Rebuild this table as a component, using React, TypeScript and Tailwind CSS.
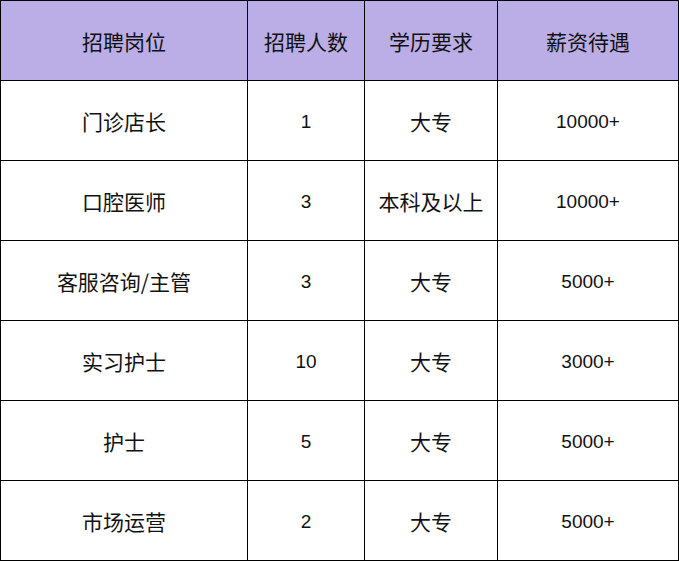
const headers = ['招聘岗位', '招聘人数', '学历要求', '薪资待遇']

const rows = [
  ['门诊店长', '1', '大专', '10000+'],
  ['口腔医师', '3', '本科及以上', '10000+'],
  ['客服咨询/主管', '3', '大专', '5000+'],
  ['实习护士', '10', '大专', '3000+'],
  ['护士', '5', '大专', '5000+'],
  ['市场运营', '2', '大专', '5000+'],
]

const cjk = "font-['Noto_Sans_CJK_SC',sans-serif] text-[21px] pt-[2px]"
const latin = "font-['Liberation_Sans',Arial,sans-serif] text-[19px] pt-[4px]"

function Cell({ text, header }: { text: string; header?: boolean }) {
  const numeric = /^[0-9+]+$/.test(text)
  return (
    <div
      className={`flex h-[79px] items-center justify-center text-[#111] ${
        header ? 'bg-[#bbaee6]' : 'bg-white'
      } ${numeric ? latin : cjk}`}
    >
      {text}
    </div>
  )
}

export default function App() {
  return (
    <div className="grid w-[679px] grid-cols-[246px_116px_132px_180px] gap-px bg-black p-px">
      {headers.map((h) => (
        <Cell key={h} text={h} header />
      ))}
      {rows.map((r, i) => r.map((c, j) => <Cell key={`${i}-${j}`} text={c} />))}
    </div>
  )
}
